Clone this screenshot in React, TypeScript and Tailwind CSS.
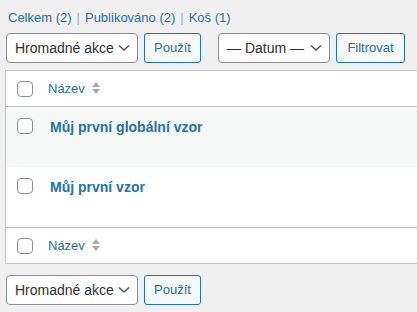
import React from "react";

const Checkbox = () => (
  <span className="block h-4 w-4 rounded-[4px] border border-[#8c8f94] bg-white" />
);

const SortIcon = () => (
  <svg width="8" height="13" viewBox="0 0 8 13" className="ml-[7px]">
    <path d="M4 0 L8 5 L0 5 Z" fill="#a7aaad" />
    <path d="M0 7 L8 7 L4 12 Z" fill="#a7aaad" />
  </svg>
);

const Select = ({ label, width }: { label: string; width: string }) => (
  <div
    className={`flex h-[30px] items-center justify-between rounded-[4px] border border-[#8c8f94] bg-white pl-[8px] pr-[7px] text-[14px] text-[#2c3338] ${width}`}
  >
    <span>{label}</span>
    <svg width="12" height="8" viewBox="0 0 12 8">
      <path d="M1 1.5 L6 6 L11 1.5" fill="none" stroke="#50575e" strokeWidth="1.6" />
    </svg>
  </div>
);

const Button = ({ label, width }: { label: string; width: string }) => (
  <div
    className={`flex h-[30px] items-center justify-center rounded-[3px] border border-[#2271b1] bg-[#f6f7f7] text-[13px] text-[#2271b1] ${width}`}
  >
    {label}
  </div>
);

const HeadRow = ({ border }: { border: "top" | "bottom" }) => (
  <div
    className={`flex h-[36px] items-center ${
      border === "bottom" ? "border-b border-[#c3c4c7]" : "border-t border-[#c3c4c7]"
    }`}
  >
    <div className="w-[42px] pl-[11px]">
      <Checkbox />
    </div>
    <span className="text-[13px] text-[#2271b1]">Název</span>
    <SortIcon />
  </div>
);

const Row = ({ title, striped }: { title: string; striped?: boolean }) => (
  <div className={`flex h-[60px] items-start pt-[11px] ${striped ? "bg-[#f6f7f7]" : "bg-white"}`}>
    <div className="w-[44px] pl-[11px]">
      <Checkbox />
    </div>
    <span className="text-[14px] font-bold leading-[18px] text-[#2271b1]">{title}</span>
  </div>
);

export default function App() {
  return (
    <div
      className="h-[312px] w-[417px] overflow-hidden bg-[#f0f0f1] text-[#3c434a]"
      style={{ fontFamily: '"Liberation Sans", Arial, sans-serif' }}
    >
      <div className="flex h-[18px] items-center gap-[5px] pl-[8px] pt-[17px] text-[13px] leading-[18px]">
        <span className="text-[#2271b1]">Celkem (2)</span>
        <span className="text-[#a7aaad]">|</span>
        <span className="text-[#2271b1]">Publikováno (2)</span>
        <span className="text-[#a7aaad]">|</span>
        <span className="text-[#2271b1]">Koš (1)</span>
      </div>

      <div className="mt-[15px] flex items-center pl-[6px]">
        <Select label="Hromadné akce" width="w-[132px]" />
        <div className="ml-[6px]">
          <Button label="Použít" width="w-[57px]" />
        </div>
        <div className="ml-[17px]">
          <Select label="— Datum —" width="w-[112px]" />
        </div>
        <div className="ml-[6px]">
          <Button label="Filtrovat" width="w-[69px]" />
        </div>
      </div>

      <div className="ml-[5px] mt-[7px] w-[430px] border border-[#c3c4c7] bg-white">
        <HeadRow border="bottom" />
        <Row title="Můj první globální vzor" striped />
        <Row title="Můj první vzor" />
        <HeadRow border="top" />
      </div>

      <div className="mt-[11px] flex items-center pl-[6px]">
        <Select label="Hromadné akce" width="w-[132px]" />
        <div className="ml-[6px]">
          <Button label="Použít" width="w-[57px]" />
        </div>
      </div>
    </div>
  );
}
